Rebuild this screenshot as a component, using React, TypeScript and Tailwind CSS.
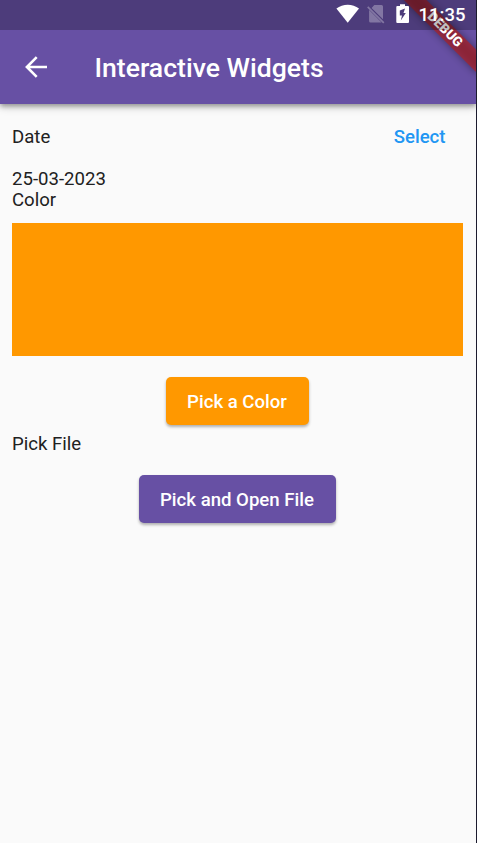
function StatusBar() {
  return (
    <div className="absolute inset-x-0 top-0 flex h-[30px] items-center bg-black/25 text-white">
      <svg className="absolute left-[336px] top-[4px]" width="24" height="19" viewBox="0 0 24 19" fill="#fff">
        <path d="M0.4 4.6C6.8-.6 16.700-.6 23 4.600L11.700 18.700Z" />
      </svg>
      <svg className="absolute left-[366px] top-[4px]" width="20" height="20" viewBox="0 0 20 20" fill="#fff" fillOpacity=".3">
        <path d="M8.300 1H15.500Q17 1 17 2.500V15.200L5.600 3.900ZM3.100 6L15.600 18.400H4.600Q3.100 18.400 3.100 16.900Z" />
        <path d="M2.300 2.200L18.400 18.300L17.200 19.500L1.100 3.400Z" />
      </svg>
      <svg className="absolute left-[396px] top-[4px]" width="14" height="20" viewBox="0 0 14 20">
        <path fillRule="evenodd" fill="#fff" d="M4 .3H9V2H12Q13 2 13 3V18Q13 19 12 19H1.300Q.3 19 .3 18V3Q.3 2 1.300 2H4ZM9 4.500L3.800 6.500V11.500H6L4.800 16.500L9.800 9H7.500Z" />
      </svg>
      <span className="absolute left-[418.500px] top-[4px] text-[18.500px] leading-[22px] font-medium">11:35</span>
    </div>
  );
}

function DebugBanner() {
  return (
    <div className="pointer-events-none absolute right-0 top-0 h-[100px] w-[100px] overflow-hidden">
      <div className="absolute left-full top-0 h-0 w-0 rotate-45">
        <div className="absolute left-[-53px] top-[35px] h-[16px] w-[106px] bg-black/40 blur-[4px]" />
        <div className="absolute left-[-53px] top-[35px] flex h-[16px] w-[106px] items-center justify-center bg-[#b71c1c]/63 pr-[2px] text-[13.500px] leading-none font-black text-white">
          DEBUG
        </div>
      </div>
    </div>
  );
}

export default function App() {
  return (
    <div className="h-[843px] w-[477px] overflow-hidden border-r border-[#1c1b2e] bg-[#fafafa] font-['Roboto',sans-serif] text-[18.600px] leading-[21px] text-[#212121]">
      <div className="relative">
        <header className="flex h-[104px] items-center bg-[#6750a4] pt-[30px] pl-[24px] shadow-[0_2px_5px_rgba(0,0,0,0.35),0_4px_8px_rgba(0,0,0,0.14)]">
          <svg width="24" height="24" viewBox="0 0 24 24" fill="none" stroke="#fff" strokeWidth="2.600">
            <path d="M23 12H3M12.700 2.200L2.900 12L12.700 21.800" />
          </svg>
          <h1 className="ml-[46.500px] pt-[1px] text-[26.600px] leading-[32px] font-medium text-white">Interactive Widgets</h1>
        </header>
        <DebugBanner />
        <StatusBar />
      </div>
      <main className="px-[12px] pt-[1px]">
        <div className="flex h-[64px] items-center justify-between pt-[1px]">
          <span>Date</span>
          <button className="mr-[18.500px] font-medium text-[#2196f3]">Select</button>
        </div>
        <p>25-03-2023</p>
        <p>Color</p>
        <div className="mt-[12.400px] mr-[1px] h-[132.600px] bg-[#ff9800]" />
        <div className="mt-[13px] mr-[1px] flex h-[64px] items-center justify-center">
          <button className="h-[48px] w-[143px] rounded-[5px] bg-[#ff9800] pt-[3px] pr-[1px] font-medium text-white shadow-[0_2px_3px_rgba(0,0,0,0.3)]">Pick a Color</button>
        </div>
        <p className="pt-[1px]">Pick File</p>
        <div className="mt-[12.500px] mr-[1px] flex h-[64px] items-center justify-center">
          <button className="h-[48px] w-[197px] rounded-[5px] bg-[#6750a4] pt-[3px] pr-[1px] font-medium text-white shadow-[0_2px_3px_rgba(0,0,0,0.3)]">Pick and Open File</button>
        </div>
      </main>
    </div>
  );
}
